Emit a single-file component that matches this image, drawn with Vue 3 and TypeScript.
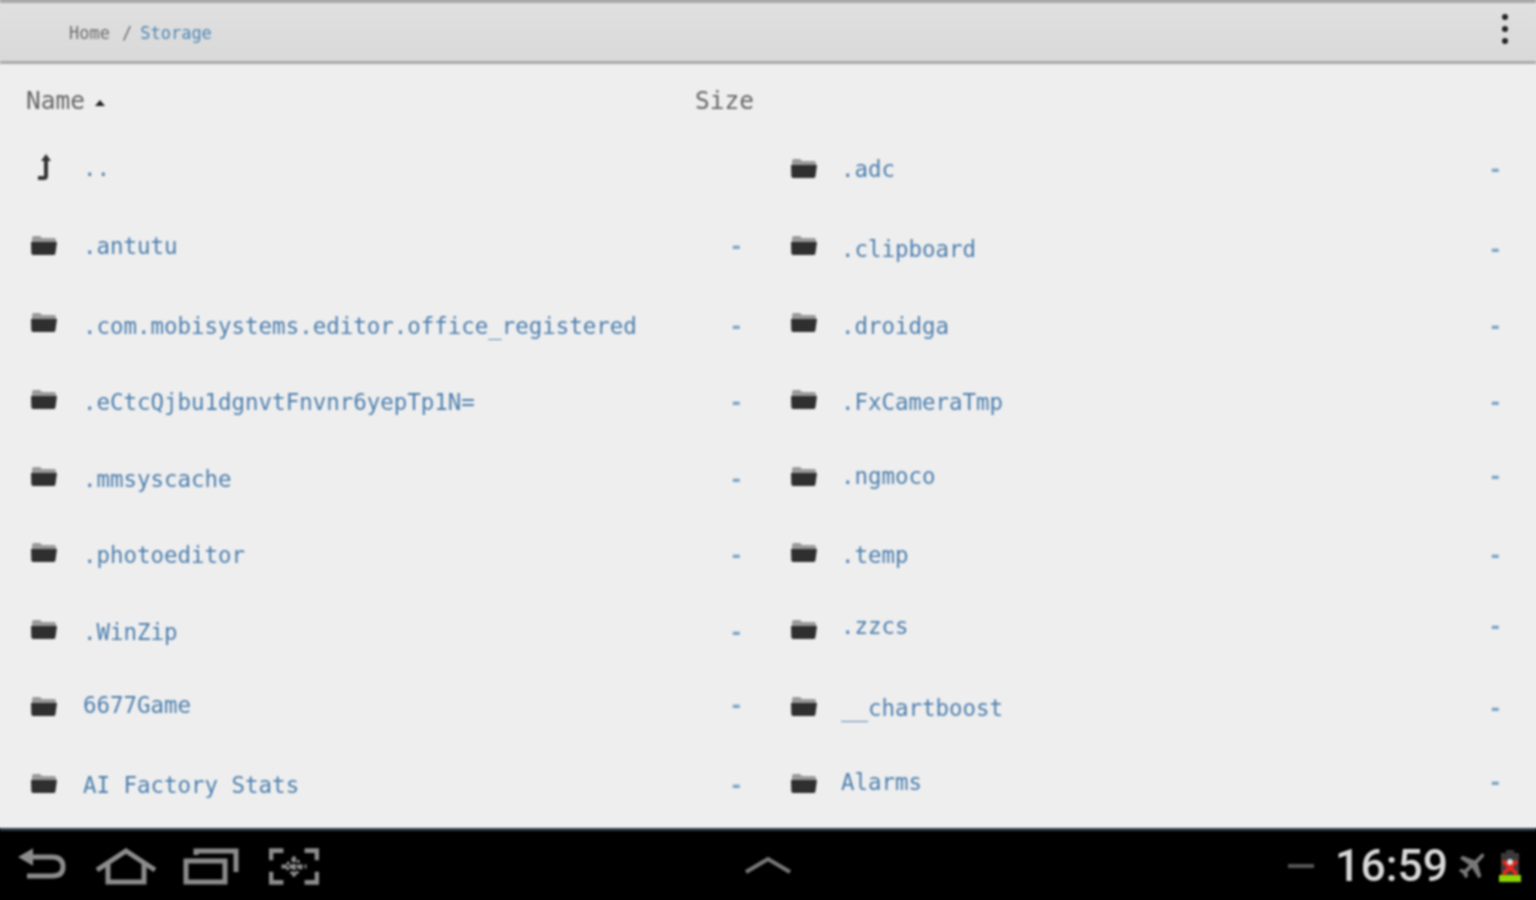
<script setup lang="ts">
const left = [
  { n: '..', up: true, d: 0 },
  { n: '.antutu', d: 1 },
  { n: '.com.mobisystems.editor.office_registered', d: 4 },
  { n: '.eCtcQjbu1dgnvtFnvnr6yepTp1N=', d: 3 },
  { n: '.mmsyscache', d: 3 },
  { n: '.photoeditor', d: 3 },
  { n: '.WinZip', d: 3 },
  { n: '6677Game', d: -1 },
  { n: 'AI Factory Stats', d: 2 },
]
const right = [
  { n: '.adc', d: 1 },
  { n: '.clipboard', d: 4 },
  { n: '.droidga', d: 4 },
  { n: '.FxCameraTmp', d: 3 },
  { n: '.ngmoco', d: 0 },
  { n: '.temp', d: 3 },
  { n: '.zzcs', d: -3 },
  { n: '__chartboost', d: 2 },
  { n: 'Alarms', d: -1 },
]
</script>

<template>
  <div class="frame">
    <div class="screen">
      <header class="bar">
        <div class="crumbs"><span class="home">Home</span><span class="sep">/</span><span class="cur">Storage</span></div>
        <div class="dots"><i></i><i></i><i></i></div>
      </header>
      <main class="content">
        <div class="head">
          <div class="h-name">Name <svg class="sort" width="10" height="6" viewBox="0 0 10 6"><path d="M5 0 L10 6 H0 Z" fill="#222"/></svg></div>
          <div class="h-size">Size</div>
        </div>
        <div class="cols">
          <div class="col">
            <div v-for="r in left" :key="r.n" class="row">
              <svg v-if="r.up" class="ic" viewBox="0 0 28 28"><path d="M16 0 L21 7 H18 V22 Q18 26 14 26 H8 V22 H14 V7 H11 Z" fill="#333"/></svg>
              <svg v-else class="ic" viewBox="0 0 28 28"><path d="M2 7 Q2 5 4 5 H10 L12 7 H24 Q26 7 26 9 V11 H2 Z" fill="#999"/><path d="M1 11 H27 L25.500 22 Q25.300 24 24 24 H3 Q1.500 24 1.300 22 Z" fill="#2f2f2f"/></svg>
              <span class="nm" :style="{ transform: `translateY(${r.d}px)` }">{{ r.n }}</span>
              <span v-if="!r.up" class="dash" :style="{ transform: `translateY(${r.d}px)` }">-</span>
            </div>
          </div>
          <div class="col col-r">
            <div v-for="r in right" :key="r.n" class="row">
              <svg class="ic" viewBox="0 0 28 28"><path d="M2 7 Q2 5 4 5 H10 L12 7 H24 Q26 7 26 9 V11 H2 Z" fill="#999"/><path d="M1 11 H27 L25.500 22 Q25.300 24 24 24 H3 Q1.500 24 1.300 22 Z" fill="#2f2f2f"/></svg>
              <span class="nm" :style="{ transform: `translateY(${r.d}px)` }">{{ r.n }}</span>
              <span class="dash" :style="{ transform: `translateY(${r.d}px)` }">-</span>
            </div>
          </div>
        </div>
      </main>
      <footer class="nav">
        <div class="nav-left">
          <svg width="50" height="38" viewBox="0 0 50 38" fill="none" stroke="#8c8c8c" stroke-width="5"><path d="M8 10 H35 Q46 10 46 20 Q46 29 35 29 H10"/><path d="M15 3 L3 10 L15 17 Z" fill="#8c8c8c" stroke-width="2"/></svg>
          <svg width="62" height="38" viewBox="0 0 62 38" fill="none" stroke="#8c8c8c" stroke-width="5"><path d="M2 23 L31 4 L60 23"/><path d="M13 16 V35 H49 V16"/></svg>
          <svg class="recent" width="56" height="38" viewBox="0 0 56 38" fill="none" stroke="#8c8c8c" stroke-width="5"><path d="M3 14 H42 V35 H3 Z"/><path d="M13 8 V4 H53 V25"/></svg>
          <svg class="shot" width="52" height="38" viewBox="0 0 52 38" fill="none" stroke="#8c8c8c" stroke-width="5"><path d="M2 13 V3 H15 M37 3 H50 V13 M2 25 V36 H15 M37 36 H50 V25"/><path d="M26 9 V30 M13 19.500 H39" stroke-width="4" stroke-dasharray="6 2"/><circle cx="26" cy="19.500" r="7" stroke-width="3" stroke-dasharray="3 3"/></svg>
        </div>
        <svg class="chev" width="48" height="20" viewBox="0 0 48 20" fill="none" stroke="#777" stroke-width="4"><path d="M2 16 L24 3 L46 16"/></svg>
        <div class="nav-right">
          <span class="minus"></span>
          <span class="time">16:59</span>
          <svg class="plane" width="28" height="28" viewBox="0 0 30 30"><path d="M27 2 Q29 3 27 6 L21 12 L25 26 L22 28 L15 17 L10 22 L11 26 L8 28 L5 23 L1 20 L3 18 L7 19 L12 14 L2 7 L5 4 L18 9 L24 3 Q26 1 27 2 Z" fill="#777"/></svg>
          <svg width="24" height="34" viewBox="0 0 24 34"><path d="M8 1 H16 V4 H21 V27 H3 V4 H8 Z" fill="#3a3a3a"/><rect x="1" y="26" width="22" height="7" fill="#8fd400"/><path d="M5 12 L19 25 M19 12 L5 25" stroke="#e5261f" stroke-width="4"/><circle cx="12" cy="13" r="3" fill="#ddd"/></svg>
        </div>
      </footer>
    </div>
  </div>
</template>

<style scoped>
.frame { width: 1536px; height: 900px; overflow: hidden; }
.screen { width: 1552px; height: 916px; margin: -8px; padding: 8px; box-sizing: border-box; display: flex; flex-direction: column; background: linear-gradient(#a8a8a8 8px, #eeeeee 8px, #eeeeee 908px, #000 908px); overflow: hidden; font-family: "DejaVu Sans Mono", monospace; filter: blur(0.8px); }
.bar { height: 64px; box-sizing: border-box; background: linear-gradient(#e0e0e0, #d9d9d9); border-top: 3px solid #a8a8a8; border-bottom: 3px solid #a9a9a9; display: flex; align-items: center; justify-content: space-between; padding: 0 28px 6px 69px; flex: none; box-shadow: -8px 0 0 #dcdcdc, 8px 0 0 #dcdcdc; }
.crumbs { font-size: 17px; display: flex; padding-top: 8px; }
.home { color: #6c6c6c; }
.sep { color: #6c6c6c; margin: 0 8px 0 12px; }
.cur { color: #4d86b5; }
.dots { display: flex; flex-direction: column; gap: 6px; }
.dots i { width: 6px; height: 6px; border-radius: 50%; background: #222; display: block; }
.content { flex: 1; min-height: 0; }
.head { display: flex; height: 72px; align-items: center; font-size: 24.5px; color: #666; box-sizing: border-box; }
.h-name { width: 695px; padding-left: 26px; box-sizing: border-box; display: flex; align-items: center; gap: 10px; }
.sort { margin-top: 6px; }
.cols { display: grid; grid-template-columns: 760px 776px; margin-top: -6px; }
.col { display: flex; flex-direction: column; }
.row { height: 76.800px; display: flex; align-items: center; padding-left: 30px; padding-right: 17px; box-sizing: border-box; }
.col-r .row { padding-right: 34px; }
.col-r .ic { margin-right: 23px; }
.ic { width: 28px; height: 28px; flex: none; margin-right: 25px; }
.nm { flex: 1; font-size: 22.450px; color: #4d7fae; white-space: nowrap; }
.dash { color: #79a3c6; font-size: 22.500px; font-weight: 700; }
.nav { height: 72px; flex: none; background: #000; border-top: 3px solid #2b3a45; box-sizing: border-box; display: flex; align-items: center; position: relative; padding: 0 14px 0 17px; justify-content: space-between; box-shadow: -8px 0 0 #000, 8px 0 0 #000; }
.nav-left { display: flex; align-items: center; gap: 28px; }
.recent { margin-left: -2px; }
.shot { margin-left: 2px; width: 50px; }
.chev { position: absolute; left: 744px; top: 25px; }
.nav-right { display: flex; align-items: center; gap: 12px; }
.minus { width: 26px; height: 4px; background: #555; margin-right: 9px; }
.time { color: #d8d8d8; font-family: "Roboto", sans-serif; font-size: 44.500px; font-weight: 500; margin-right: -3px; }
.plane { margin-left: 1px; }
</style>
